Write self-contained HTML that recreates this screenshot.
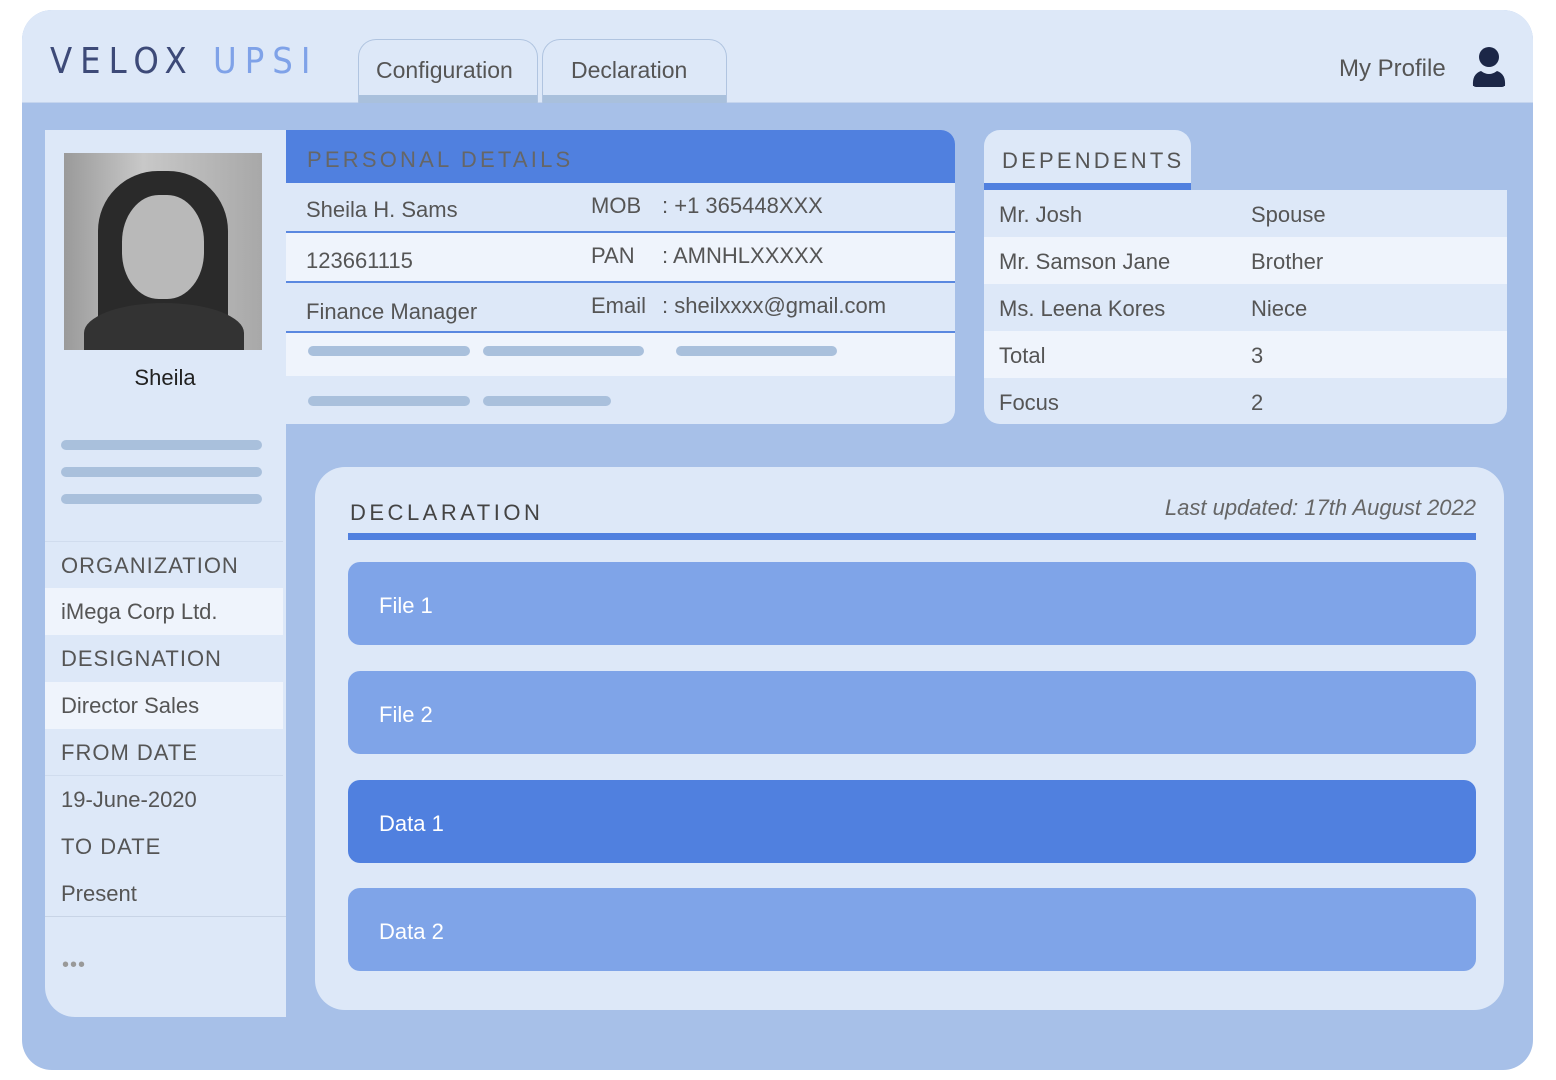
<!DOCTYPE html>
<html><head><style>
*{margin:0;padding:0;box-sizing:border-box}
body{width:1556px;height:1080px;background:#fff;font-family:"Liberation Sans","DejaVu Sans",sans-serif;color:#555;position:relative;overflow:hidden}
.a{position:absolute}
.t{font-size:22px;color:#555;white-space:nowrap}
.bar{position:absolute;background:#a9c0dc;border-radius:6px;height:10px}
.row{position:absolute;left:0;right:0;height:47px}
.fb{position:absolute;left:348px;width:1128px;height:83px;border-radius:12px;background:#7fa4e8;color:#fff;font-size:22px;padding:31px 0 0 31px}
</style></head><body>
<div class="a" style="left:22px;top:10px;width:1511px;height:1060px;border-radius:30px;background:#a7c0e8;overflow:hidden">
 <div class="a" style="left:0;top:0;width:1511px;height:93px;background:#dde8f8;border-bottom:1px solid #c5d5ee"></div>
</div>
<div class="a" style="left:50px;top:41px;font-size:36px;letter-spacing:8px;color:#3d4a78;font-family:'DejaVu Sans Condensed','Liberation Sans',sans-serif">VELOX <span style="color:#7fa2e8">UPSI</span></div>
<div class="a" style="left:358px;top:39px;width:180px;height:64px;border:1px solid #b0c4e0;border-bottom:none;border-radius:18px 18px 0 0;background:#dde8f8"><div class="a" style="left:0;right:0;bottom:0;height:8px;background:#a9c0dc"></div><div class="a t" style="left:17px;top:17px;font-size:23px">Configuration</div></div>
<div class="a" style="left:542px;top:39px;width:185px;height:64px;border:1px solid #b0c4e0;border-bottom:none;border-radius:18px 18px 0 0;background:#dde8f8"><div class="a" style="left:0;right:0;bottom:0;height:8px;background:#a9c0dc"></div><div class="a t" style="left:28px;top:17px;font-size:23px">Declaration</div></div>
<div class="a t" style="left:1339px;top:55px;font-size:24px">My Profile</div>
<svg class="a" style="left:1471px;top:46px" width="36" height="42" viewBox="0 0 36 42"><circle cx="18" cy="11" r="10" fill="#1c2747"/><path d="M2 40 Q1 28 10 25 Q18 31 26 25 Q35 28 34 40 Z" fill="#1c2747"/><rect x="2" y="34" width="32" height="7" rx="3" fill="#1c2747"/></svg>

<!-- left panel -->
<div class="a" style="left:45px;top:130px;width:241px;height:887px;background:#dde8f8;border-radius:0 0 0 30px">
 <div class="a" style="left:19px;top:23px;width:198px;height:197px;overflow:hidden;background:linear-gradient(90deg,#9a9a9a,#c8c8c8 40%,#a8a8a8)">
  <div class="a" style="left:34px;top:18px;width:130px;height:200px;border-radius:60px 60px 20px 20px;background:#2a2a2a"></div>
  <div class="a" style="left:58px;top:42px;width:82px;height:104px;border-radius:45%;background:#b9b9b9"></div>
  <div class="a" style="left:20px;top:150px;width:160px;height:60px;border-radius:50% 50% 0 0;background:#333"></div>
 </div>
 <div class="a t" style="left:0;width:240px;text-align:center;top:235px;color:#222">Sheila</div>
 <div class="bar" style="left:16px;top:310px;width:201px"></div>
 <div class="bar" style="left:16px;top:337px;width:201px"></div>
 <div class="bar" style="left:16px;top:364px;width:201px"></div>
 <div class="row t" style="top:411px;right:3px;background:#dde8f8;padding:11px 16px;border-top:1px solid #d0dcee;letter-spacing:1px">ORGANIZATION</div>
 <div class="row t" style="top:458px;right:3px;background:#eff4fc;padding:11px 16px">iMega Corp Ltd.</div>
 <div class="row t" style="top:505px;right:3px;background:#dde8f8;padding:11px 16px;letter-spacing:1px">DESIGNATION</div>
 <div class="row t" style="top:552px;right:3px;background:#eff4fc;padding:11px 16px">Director Sales</div>
 <div class="row t" style="top:599px;right:3px;background:#dde8f8;padding:11px 16px;letter-spacing:1px;border-bottom:1px solid #d0dcee">FROM DATE</div>
 <div class="row t" style="top:646px;padding:11px 16px">19-June-2020</div>
 <div class="row t" style="top:693px;padding:11px 16px;letter-spacing:1px">TO DATE</div>
 <div class="row t" style="top:740px;padding:11px 16px;border-bottom:1px solid #c8d4e6">Present</div>
 <div class="a" style="left:17px;top:824px;color:#999;font-size:20px;letter-spacing:1px">•••</div>
</div>

<!-- personal details -->
<div class="a" style="left:286px;top:130px;width:669px;height:294px;background:#dde8f8;border-radius:0 14px 14px 0;overflow:hidden">
 <div class="a" style="left:0;top:0;width:669px;height:53px;background:#5080df"></div>
 <div class="a" style="left:21px;top:17px;font-size:22px;letter-spacing:3.2px;color:#666">PERSONAL DETAILS</div>
 <div class="a" style="left:0;top:53px;width:669px;height:50px;background:#dde8f8;border-bottom:2px solid #5a88e0"></div>
 <div class="a" style="left:0;top:103px;width:669px;height:50px;background:#eff4fc;border-bottom:2px solid #5a88e0"></div>
 <div class="a" style="left:0;top:153px;width:669px;height:50px;background:#dde8f8;border-bottom:2px solid #5a88e0"></div>
 <div class="a" style="left:0;top:203px;width:669px;height:43px;background:#eff4fc"></div>
 <div class="a t" style="left:20px;top:67px">Sheila H. Sams</div>
 <div class="a t" style="left:20px;top:118px">123661115</div>
 <div class="a t" style="left:20px;top:169px">Finance Manager</div>
 <div class="a t" style="left:305px;top:63px">MOB</div><div class="a t" style="left:376px;top:63px">: +1 365448XXX</div>
 <div class="a t" style="left:305px;top:113px">PAN</div><div class="a t" style="left:376px;top:113px">: AMNHLXXXXX</div>
 <div class="a t" style="left:305px;top:163px">Email</div><div class="a t" style="left:376px;top:163px">: sheilxxxx@gmail.com</div>
 <div class="bar" style="left:22px;top:216px;width:162px"></div>
 <div class="bar" style="left:197px;top:216px;width:161px"></div>
 <div class="bar" style="left:390px;top:216px;width:161px"></div>
 <div class="bar" style="left:22px;top:266px;width:162px"></div>
 <div class="bar" style="left:197px;top:266px;width:128px"></div>
</div>

<!-- dependents -->
<div class="a" style="left:984px;top:130px;width:207px;height:60px;background:#dde8f8;border-radius:16px 16px 0 0;border-bottom:7px solid #5080df"></div>
<div class="a" style="left:1002px;top:148px;font-size:22px;letter-spacing:3.2px;color:#555">DEPENDENTS</div>
<div class="a" style="left:984px;top:190px;width:523px;height:234px;border-radius:0 0 16px 16px;overflow:hidden;background:#dde8f8">
 <div class="row" style="top:0;background:#dde8f8"></div>
 <div class="row" style="top:47px;background:#eff4fc"></div>
 <div class="row" style="top:94px;background:#dde8f8"></div>
 <div class="row" style="top:141px;background:#eff4fc"></div>
 <div class="a t" style="left:15px;top:12px">Mr. Josh</div><div class="a t" style="left:267px;top:12px">Spouse</div>
 <div class="a t" style="left:15px;top:59px">Mr. Samson Jane</div><div class="a t" style="left:267px;top:59px">Brother</div>
 <div class="a t" style="left:15px;top:106px">Ms. Leena Kores</div><div class="a t" style="left:267px;top:106px">Niece</div>
 <div class="a t" style="left:15px;top:153px">Total</div><div class="a t" style="left:267px;top:153px">3</div>
 <div class="a t" style="left:15px;top:200px">Focus</div><div class="a t" style="left:267px;top:200px">2</div>
</div>

<!-- declaration -->
<div class="a" style="left:315px;top:467px;width:1189px;height:543px;background:#dde8f8;border-radius:30px"></div>
<div class="a" style="left:350px;top:500px;font-size:22px;letter-spacing:3.5px;color:#444">DECLARATION</div>
<div class="a" style="left:1080px;top:495px;width:396px;text-align:right;font-size:22px;font-style:italic;color:#666">Last updated: 17th August 2022</div>
<div class="a" style="left:348px;top:533px;width:1128px;height:7px;background:#5080df"></div>
<div class="fb" style="top:562px">File 1</div>
<div class="fb" style="top:671px">File 2</div>
<div class="fb" style="top:780px;background:#5080df">Data 1</div>
<div class="fb" style="top:888px">Data 2</div>
</body></html>
